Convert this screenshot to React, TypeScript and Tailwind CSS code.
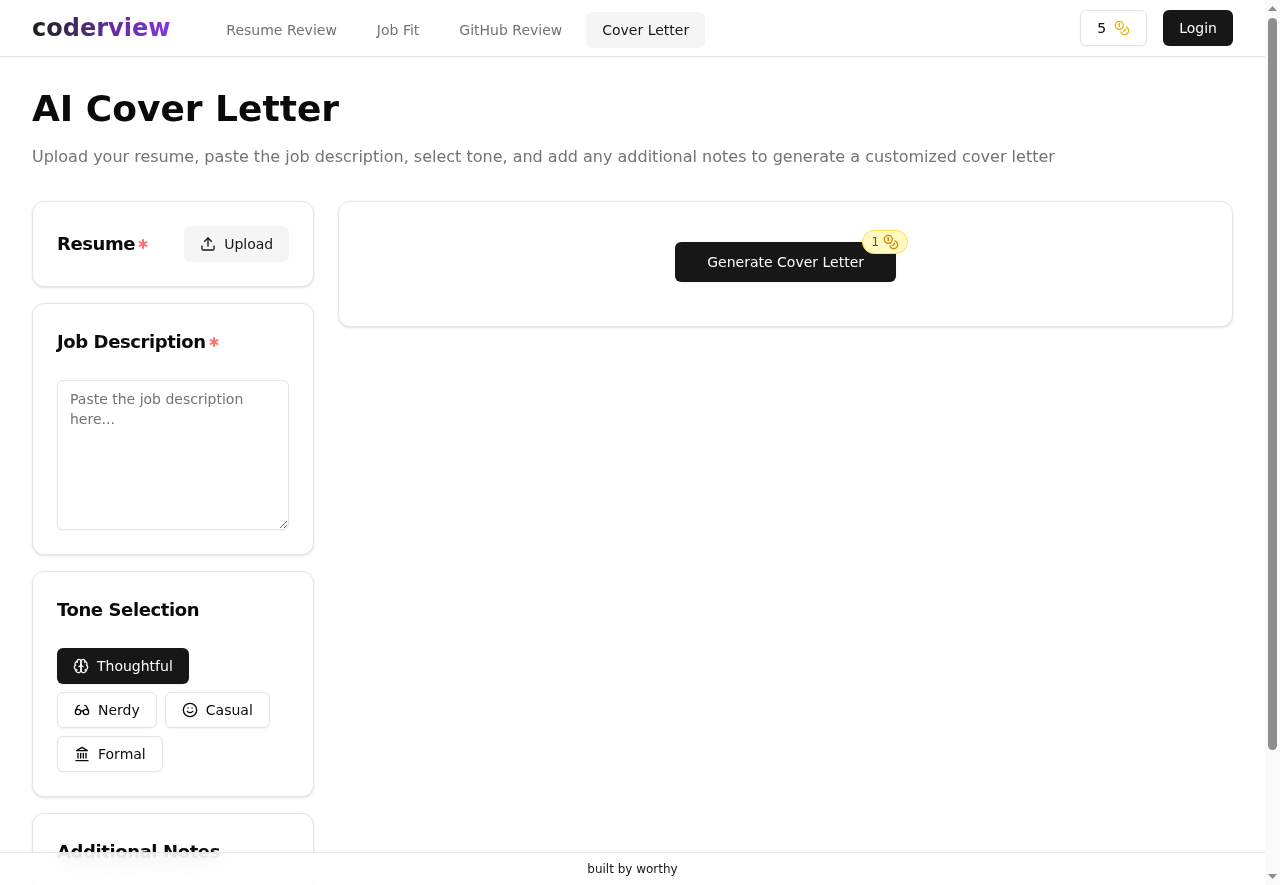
import { Asterisk, Coins, Upload, Glasses, Smile } from 'lucide-react'
import React from 'react'

const navItems = ['Resume Review', 'Job Fit', 'GitHub Review', 'Cover Letter']

function Required() {
  return <Asterisk size={16} strokeWidth={3} className="text-[#f87171]" />
}

function BrainIcon() {
  return (
    <svg width="16" height="16" viewBox="0 0 24 24" fill="none" stroke="currentColor" strokeWidth="2" strokeLinecap="round" strokeLinejoin="round">
      <path d="M12 5a3 3 0 1 0-5.997.125 4 4 0 0 0-2.526 5.77 4 4 0 0 0 .556 6.588A4 4 0 1 0 12 18Z" />
      <path d="M12 5a3 3 0 1 1 5.997.125 4 4 0 0 1 2.526 5.77 4 4 0 0 1-.556 6.588A4 4 0 1 1 12 18Z" />
      <path d="M15 13a4.5 4.5 0 0 1-3-4 4.5 4.5 0 0 1-3 4" />
      <path d="M17.599 6.5a3 3 0 0 0 .399-1.375" />
      <path d="M6.003 5.125A3 3 0 0 0 6.401 6.5" />
      <path d="M3.477 10.896a4 4 0 0 1 .585-.396" />
      <path d="M19.938 10.5a4 4 0 0 1 .585.396" />
      <path d="M6 18a4 4 0 0 1-1.967-.516" />
      <path d="M19.967 17.484A4 4 0 0 1 18 18" />
    </svg>
  )
}

function LandmarkIcon() {
  return (
    <svg width="16" height="16" viewBox="0 0 24 24" fill="none" stroke="currentColor" strokeWidth="2" strokeLinecap="round" strokeLinejoin="round">
      <path d="M3 22h18" />
      <path d="M6 18v-7" />
      <path d="M10 18v-7" />
      <path d="M14 18v-7" />
      <path d="M18 18v-7" />
      <path d="M12 2l8 5H4z" />
    </svg>
  )
}

function ToneButton({ label, icon, active }: { label: string; icon: React.ReactNode; active?: boolean }) {
  return (
    <button
      className={
        active
          ? 'h-9 flex items-center gap-2 rounded-md bg-[#171717] px-4 text-sm text-[#fafafa] shadow-xs'
          : 'h-9 flex items-center gap-2 rounded-md border border-[#e5e5e5] bg-white px-4 text-sm text-[#0a0a0a] shadow-xs'
      }
    >
      {icon}
      {label}
    </button>
  )
}

function Card({ children }: { children: React.ReactNode }) {
  return <div className="rounded-xl border border-[#e5e5e5] bg-white p-6 shadow-sm">{children}</div>
}

function Scrollbar() {
  return (
    <div className="fixed top-0 bottom-0 right-0 z-20 w-[15px] bg-[#fafafa] flex flex-col items-center justify-between py-[6px]">
      <svg width="9" height="5" viewBox="0 0 9 5" className="fill-[#8e8e8e]">
        <path d="M4.5 0 9 5H0Z" />
      </svg>
      <div className="absolute top-[18px] left-[3px] h-[732px] w-[9px] rounded-full bg-[#8e8e8e]" />
      <svg width="9" height="5" viewBox="0 0 9 5" className="fill-[#8e8e8e]">
        <path d="M0 0h9L4.5 5Z" />
      </svg>
    </div>
  )
}

export default function App() {
  return (
    <div className="min-h-screen mr-[15px] bg-white text-[#0a0a0a] font-['DejaVu_Sans',sans-serif]">
      {/* Header */}
      <header className="sticky top-0 z-10 h-[57px] border-b border-[#e5e5e5] bg-white px-8">
        <div className="h-full flex items-center justify-between will-change-transform">
          <div className="flex items-center gap-10">
            <div className="text-2xl font-bold bg-gradient-to-r from-[#1c1c1c] via-[#5a2b8f] via-50% to-[#8534e0] bg-clip-text text-transparent">
              coderview
            </div>
            <nav className="flex items-center gap-2 mt-1">
              {navItems.map((item) => (
                <a
                  key={item}
                  className={
                    item === 'Cover Letter'
                      ? 'h-9 flex items-center rounded-md bg-[#f5f5f5] px-4 text-sm text-[#171717]'
                      : 'h-9 flex items-center rounded-md px-4 text-sm text-[#737373]'
                  }
                >
                  {item}
                </a>
              ))}
            </nav>
          </div>
          <div className="flex items-center gap-4">
            <div className="h-9 flex items-center gap-2 rounded-md border border-[#e5e5e5] bg-white px-4 text-sm shadow-xs">
              5 <Coins size={16} className="text-[#eab308]" />
            </div>
            <button className="h-9 rounded-md bg-[#171717] px-4 text-sm text-[#fafafa]">Login</button>
          </div>
        </div>
      </header>

      <main className="px-8 pt-8 pb-6 will-change-transform">
        <h1 className="text-4xl font-bold mb-4">AI Cover Letter</h1>
        <p className="text-base text-[#737373] mb-8">
          Upload your resume, paste the job description, select tone, and add any additional notes to generate a customized cover letter
        </p>

        <div className="grid grid-cols-4 gap-6 items-start">
          <div className="flex flex-col gap-4">
            {/* Resume */}
            <Card>
              <div className="flex items-center justify-between">
                <h2 className="text-lg font-semibold tracking-[-0.4px] flex items-center">Resume<Required /></h2>
                <button className="h-9 flex items-center gap-2 rounded-md bg-[#f5f5f5] px-4 text-sm text-[#171717]">
                  <Upload size={16} /> Upload
                </button>
              </div>
            </Card>

            {/* Job description */}
            <Card>
              <h2 className="text-lg font-semibold tracking-[-0.4px] flex items-center mb-6">Job Description<Required /></h2>
              <textarea
                placeholder="Paste the job description here..."
                className="block h-[150px] w-full rounded-md border border-[#e5e5e5] px-3 py-2 text-sm placeholder:text-[#737373] shadow-xs"
              />
            </Card>

            {/* Tone */}
            <Card>
              <h2 className="text-lg font-semibold tracking-[-0.4px] mb-6">Tone Selection</h2>
              <div className="flex flex-wrap gap-2">
                <ToneButton active label="Thoughtful" icon={<BrainIcon />} />
                <ToneButton label="Nerdy" icon={<Glasses size={16} />} />
                <ToneButton label="Casual" icon={<Smile size={16} />} />
                <ToneButton label="Formal" icon={<LandmarkIcon />} />
              </div>
            </Card>

            {/* Notes */}
            <Card>
              <h2 className="text-lg font-semibold tracking-[-0.4px] mb-6">Additional Notes</h2>
              <textarea
                placeholder="Add any additional notes here..."
                className="block h-[80px] w-full rounded-md border border-[#e5e5e5] px-3 py-2 text-sm placeholder:text-[#737373] shadow-xs"
              />
            </Card>
          </div>

          <div className="col-span-3 rounded-xl border border-[#e5e5e5] bg-white px-10 pt-10 pb-11 shadow-sm flex justify-center">
            <div className="relative">
              <button className="h-10 rounded-md bg-[#171717] px-8 text-sm text-[#fafafa] shadow-xs">
                Generate Cover Letter
              </button>
              <span className="absolute -top-3 -right-3 h-6 flex items-center gap-1 rounded-full border border-[#fde047] bg-[#fef9c3] px-2 text-xs text-[#57534e]">
                1 <Coins size={16} className="text-[#ca8a04]" />
              </span>
            </div>
          </div>
        </div>
      </main>

      {/* Footer */}
      <footer className="fixed bottom-0 left-0 right-[15px] z-10 h-[33px] flex items-center justify-center border-t border-[#e5e5e5] bg-white/80 backdrop-blur-md text-xs text-[#171717]">
        built by worthy
      </footer>
      <Scrollbar />
    </div>
  )
}
